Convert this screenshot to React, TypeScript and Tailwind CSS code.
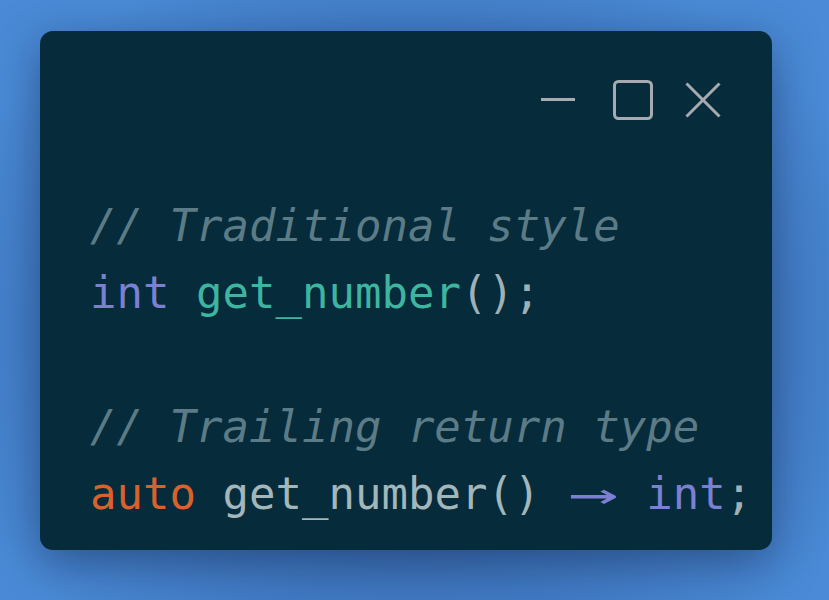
import React from "react";

const mono = { fontFamily: '"DejaVu Sans Mono", "Liberation Mono", monospace' };

export default function App() {
  return (
    <div className="w-[829px] h-[600px] overflow-hidden bg-[radial-gradient(ellipse_at_50%_55%,#2f5f9e_0%,#3b70b6_45%,#4a8ad6_85%)] pt-[31px] pl-[40px]">
      <div className="w-[732px] h-[519px] rounded-[13px] bg-[#062b3a] shadow-[0_12px_45px_rgba(20,40,80,0.5)] pt-[49px] pr-[51px]">
        <div className="flex items-center justify-end h-[40px]">
          <svg width="36" height="40" viewBox="0 0 36 40" className="mr-[37px]">
            <line x1="1" y1="19.5" x2="35" y2="19.5" stroke="#a7aab1" strokeWidth="3" />
          </svg>
          <svg width="41" height="41" viewBox="0 0 41 41" className="mr-[31px]">
            <rect x="1.5" y="1.5" width="37" height="37" rx="4" fill="none" stroke="#a7aab1" strokeWidth="3" />
          </svg>
          <svg width="36" height="36" viewBox="0 0 36 36">
            <line x1="1.5" y1="1.5" x2="34.5" y2="34.5" stroke="#a7aab1" strokeWidth="3" />
            <line x1="34.5" y1="1.5" x2="1.5" y2="34.5" stroke="#a7aab1" strokeWidth="3" />
          </svg>
        </div>
        <div className="mt-[72px] pl-[50px] text-[44px] leading-[67px] whitespace-pre" style={mono}>
          <div className="italic text-[#5b7b86]">// Traditional style</div>
          <div>
            <span className="text-[#7b80d2]">int</span>
            <span> </span>
            <span className="text-[#3db5a0]">get_number</span>
            <span className="text-[#9fb1b6]">();</span>
          </div>
          <div>&nbsp;</div>
          <div className="italic text-[#5b7b86]">// Trailing return type</div>
          <div>
            <span className="text-[#d8622d]">auto</span>
            <span> </span>
            <span className="text-[#a3b6ba]">get_number()</span>
            <span> </span>
            <span className="inline-block w-[2ch] text-center text-[#7b80d2] scale-x-[1.9]">→</span>
            <span> </span>
            <span className="text-[#7b80d2]">int</span>
            <span className="text-[#9fb1b6]">;</span>
          </div>
        </div>
      </div>
    </div>
  );
}
